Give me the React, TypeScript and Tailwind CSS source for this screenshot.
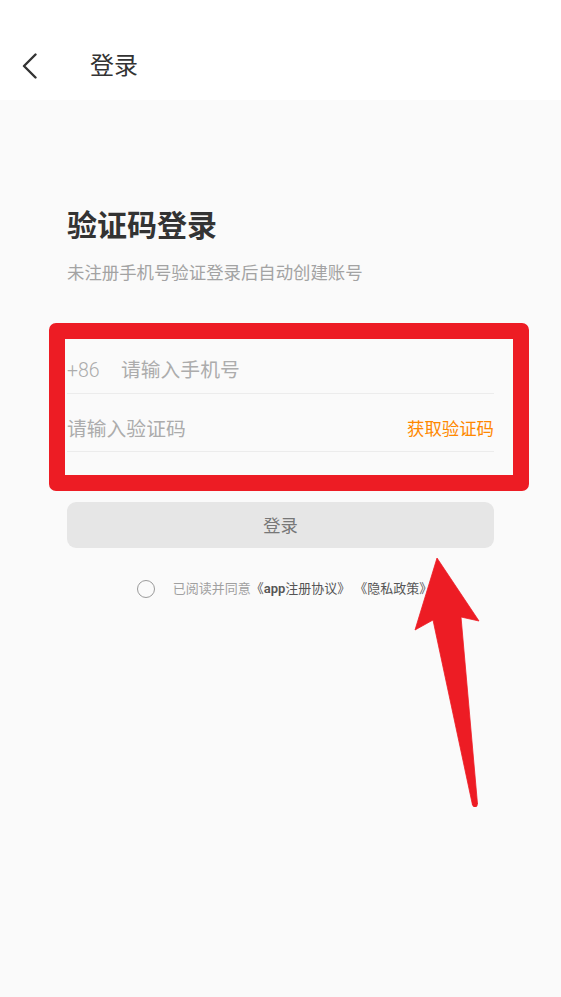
import React from "react";

export default function App() {
  return (
    <div
      className="relative w-[561px] h-[997px] overflow-hidden bg-[#fafafa]"
      style={{ fontFamily: 'Roboto, "Noto Sans CJK SC", "Noto Sans", sans-serif' }}
    >
      {/* Header */}
      <div className="h-[100px] bg-white flex items-center pt-[32px]">
        <div className="w-[90px] flex items-center pl-[22px]">
          <svg width="16" height="26" viewBox="0 0 16 26" fill="none">
            <path d="M13.5 1.5 L2 13 L13.5 24.5" stroke="#333" strokeWidth="2.4" strokeLinecap="round" strokeLinejoin="round" />
          </svg>
        </div>
        <div className="text-[24px] leading-[32px] text-[#333]">登录</div>
      </div>

      {/* Body */}
      <div className="px-[67px]">
        <div className="mt-[106px] text-[30px] leading-[40px] font-bold text-[#333]">验证码登录</div>
        <div className="mt-[15px] text-[17.4px] leading-[24px] text-[#a3a3a3]">未注册手机号验证登录后自动创建账号</div>

        <div className="mt-[51px]">
          <div className="h-[58px] pt-[13px] flex items-center border-b border-[#ececec]">
            <span className="text-[19.5px] text-[#acacac] font-light w-[54px]">+86</span>
            <span className="text-[19.8px] text-[#acacac]">请输入手机号</span>
          </div>
          <div className="h-[58px] pt-[14px] flex items-center justify-between border-b border-[#ececec]">
            <span className="text-[19.8px] text-[#acacac]">请输入验证码</span>
            <span className="text-[17.4px] text-[#ff8800]">获取验证码</span>
          </div>
        </div>

        <div className="mt-[50px] h-[46px] pt-[3px] rounded-[9px] bg-[#e6e6e6] flex items-center justify-center text-[17.3px] text-[#777]">
          登录
        </div>

        <div className="mt-[31px] h-[20px] flex items-center justify-center pl-[8px]">
          <div className="w-[18px] h-[18px] rounded-full border-[1.5px] border-[#9a9a9a] mr-[18px]" />
          <span className="text-[13px] text-[#a0a0a0]">已阅读并同意</span>
          <span className="text-[13px] text-[#555]">
            《<span className="font-semibold">app</span>注册协议》
          </span>
          <span className="ml-[4px] text-[13px] text-[#555]">《隐私政策》</span>
        </div>
      </div>

      {/* Red annotation box */}
      <div className="absolute left-[49px] top-[323px] w-[480px] h-[168px] border-[16px] border-[#ed1c24] rounded-[7px]" />

      {/* Red annotation arrow */}
      <svg className="absolute left-0 top-0" width="561" height="997" viewBox="0 0 561 997">
        <polygon
          points="437,558 479,621 461,617 477.5,804 472.5,805 433,620 415,630"
          fill="#ed1c24"
          stroke="#ed1c24"
          strokeWidth="0.8"
          strokeLinejoin="round"
        />
        <circle cx="475" cy="804.5" r="2.6" fill="#ed1c24" />
      </svg>
    </div>
  );
}
